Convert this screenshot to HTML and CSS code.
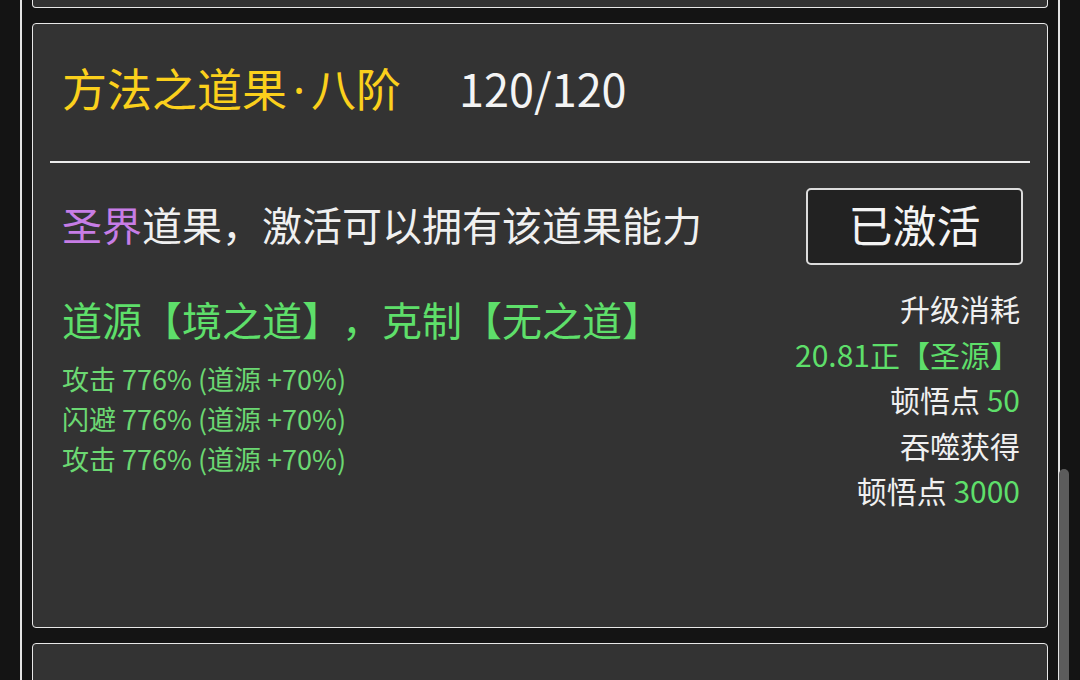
FILE: index.html
```html
<!DOCTYPE html>
<html lang="zh-CN">
<head>
<meta charset="utf-8">
<title>道果</title>
<link rel="stylesheet" href="styles.css">
</head>
<body>
<div class="frame">
  <div class="list">
    <div class="card stub"></div>
    <div class="card main">
      <div class="head">
        <span class="title">方法之道果<span class="dot">·</span>八阶</span>
        <span class="level">120/120</span>
      </div>
      <div class="divider"></div>
      <div class="body">
        <div class="desc-row">
          <div class="desc"><span class="purple">圣界</span>道果，激活可以拥有该道果能力</div>
          <div class="btn">已激活</div>
        </div>
        <div class="detail">
          <div class="left">
            <div class="counter">道源【境之道】，克制【无之道】</div>
            <div class="stats">
              <div>攻击 776% (道源 +70%)</div>
              <div>闪避 776% (道源 +70%)</div>
              <div>攻击 776% (道源 +70%)</div>
            </div>
          </div>
          <div class="right">
            <div>升级消耗</div>
            <div class="green">20.81正【圣源】</div>
            <div>顿悟点 <span class="green">50</span></div>
            <div>吞噬获得</div>
            <div>顿悟点 <span class="green">3000</span></div>
          </div>
        </div>
      </div>
    </div>
    <div class="card next"></div>
  </div>
</div>
<div class="thumb"></div>
</body>
</html>
```
FILE: styles.css
```css
html, body {
  margin: 0;
  padding: 0;
  background: #141414;
  height: 100%;
  overflow: hidden;
}
body {
  font-family: "Noto Sans CJK SC", "Noto Sans", sans-serif;
  color: #f0f0f0;
  position: relative;
  text-spacing-trim: space-all;
}
.frame {
  margin-left: 20px;
  width: 1040px;
  height: 680px;
  box-sizing: border-box;
  border-left: 2px solid #e4e4e4;
  border-right: 2px solid #e4e4e4;
  padding: 0 10px 0 10px;
  overflow: hidden;
}
.list {
  display: flex;
  flex-direction: column;
  gap: 15px;
}
.card {
  background: #333333;
  border: 1px solid #e8e8e8;
  border-radius: 4px;
  box-sizing: border-box;
}
.stub {
  height: 8px;
  border-top: none;
  border-top-left-radius: 0;
  border-top-right-radius: 0;
}
.next {
  height: 60px;
  flex-shrink: 0;
}
.main {
  height: 605px;
  padding: 0 17px;
  flex-shrink: 0;
}
.head {
  height: 137px;
  box-sizing: border-box;
  display: flex;
  align-items: center;
  padding: 0 0 10px 12px;
  gap: 58px;
}
.title {
  color: #fbd01c;
  font-size: 45px;
}
.dot {
  font-family: "Noto Sans", sans-serif;
  margin: 0 6px;
}
.level {
  color: #f4f4f4;
  font-size: 45px;
}
.divider {
  height: 2px;
  background: #ececec;
}
.body {
  padding: 25px 7px 0 12px;
}
.desc-row {
  display: flex;
  align-items: center;
  justify-content: space-between;
}
.desc {
  font-size: 40px;
  padding-bottom: 6px;
}
.purple {
  color: #c77de6;
}
.btn {
  width: 217px;
  height: 77px;
  box-sizing: border-box;
  border: 2px solid #dcdcdc;
  border-radius: 5px;
  background: #222222;
  display: flex;
  align-items: center;
  justify-content: center;
  padding-bottom: 5px;
  font-size: 44px;
  color: #f4f4f4;
}
.detail {
  display: flex;
  justify-content: space-between;
  margin-top: 19px;
}
.counter {
  color: #5edf6a;
  font-size: 40px;
  line-height: 70px;
}
.stats {
  margin-top: 5px;
  color: #6bd872;
  font-size: 27px;
  line-height: 40px;
}
.right {
  text-align: right;
  font-size: 30px;
  line-height: 45.5px;
  padding: 2px 3px 0 0;
}
.green {
  color: #5edf6a;
}
.thumb {
  position: absolute;
  left: 1059px;
  top: 469px;
  width: 10px;
  height: 240px;
  background: #5c5c5c;
  border-radius: 5px 5px 0 0;
}
```
